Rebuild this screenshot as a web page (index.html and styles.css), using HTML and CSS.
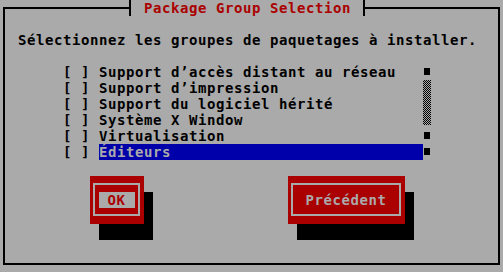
FILE: index.html
```html
<!DOCTYPE html>
<html lang="fr">
<head>
    <meta charset="UTF-8">
    <title>Package Group Selection</title>
    <link rel="stylesheet" href="styles.css">
</head>
<body>
    <div class="dialog">
        <div class="title">Package Group Selection</div>

        <p class="prompt">Sélectionnez les groupes de paquetages à installer.</p>

        <div class="listbox">
            <ul class="items">
                <li class="item"><span class="check">[ ]</span><span class="label">Support d’accès distant au réseau</span></li>
                <li class="item"><span class="check">[ ]</span><span class="label">Support d’impression</span></li>
                <li class="item"><span class="check">[ ]</span><span class="label">Support du logiciel hérité</span></li>
                <li class="item"><span class="check">[ ]</span><span class="label">Système X Window</span></li>
                <li class="item"><span class="check">[ ]</span><span class="label">Virtualisation</span></li>
                <li class="item active"><span class="check">[ ]</span><span class="label">Éditeurs</span></li>
            </ul>
            <div class="scrollbar">
                <div class="cell"><span class="block"></span></div>
                <div class="trough"></div>
                <div class="cell"><span class="block"></span></div>
                <div class="cell"><span class="block"></span></div>
            </div>
        </div>

        <div class="buttons">
            <div class="button ok">
                <div class="frame"><span class="caption focus">OK</span></div>
            </div>
            <div class="button back">
                <div class="frame"><span class="caption">Précédent</span></div>
            </div>
        </div>
    </div>
</body>
</html>
```

FILE: styles.css
```css
body {
    margin: 0;
    width: 503px;
    height: 272px;
    overflow: hidden;
    background-color: #aaaaaa;
    font-family: "DejaVu Sans Mono", "Liberation Mono", monospace;
    font-weight: bold;
    font-size: 14px;
    line-height: 16px;
    letter-spacing: 0.57px;
    color: #000;
}

.dialog {
    box-sizing: border-box;
    margin: 7px 0 0 3px;
    width: 497px;
    height: 258px;
    border: 2px solid #000;
    display: flex;
    flex-direction: column;
    align-items: flex-start;
}

.title {
    margin: -9px 0 0 124px;
    height: 16px;
    padding: 0 12px 0 13px;
    border-left: 2px solid #000;
    border-right: 2px solid #000;
    background-color: #aaaaaa;
    color: #aa0000;
    white-space: pre;
}

.prompt {
    margin: 16px 0 0;
    padding-left: 13px;
    white-space: pre;
}

.listbox {
    margin-top: 16px;
    padding-left: 58px;
    display: flex;
}

.items {
    list-style: none;
    margin: 0;
    padding: 0;
}

.item {
    display: flex;
    height: 16px;
    white-space: pre;
}

.check {
    width: 36px;
}

.label {
    width: 324px;
}

.item.active .label {
    background-color: #0000aa;
    color: #aaaaaa;
}

.scrollbar {
    display: flex;
    flex-direction: column;
    width: 9px;
}

.cell {
    height: 16px;
}

.block {
    display: block;
    width: 6px;
    height: 7px;
    margin: 4px 0 0 1px;
    background-color: #000;
}

.trough {
    width: 8px;
    height: 45px;
    margin-bottom: 3px;
    background: repeating-conic-gradient(#000 0 25%, #aaaaaa 0 50%) 0 0 / 2px 2px;
}

.buttons {
    margin-top: 16px;
    padding-left: 85px;
    display: flex;
    gap: 144px;
}

.button {
    box-sizing: border-box;
    height: 48px;
    padding: 7px 4px 8px 3px;
    background-color: #aa0000;
    box-shadow: 9px 16px 0 #000;
}

.button.ok {
    width: 54px;
}

.button.back {
    width: 117px;
}

.frame {
    box-sizing: border-box;
    height: 100%;
    border: 2px solid #aaaaaa;
    display: flex;
    align-items: center;
    justify-content: center;
}

.caption {
    height: 16px;
    color: #aaaaaa;
    white-space: pre;
}

.caption.focus {
    width: 36px;
    text-align: center;
    background-color: #aaaaaa;
    color: #aa0000;
}
```
